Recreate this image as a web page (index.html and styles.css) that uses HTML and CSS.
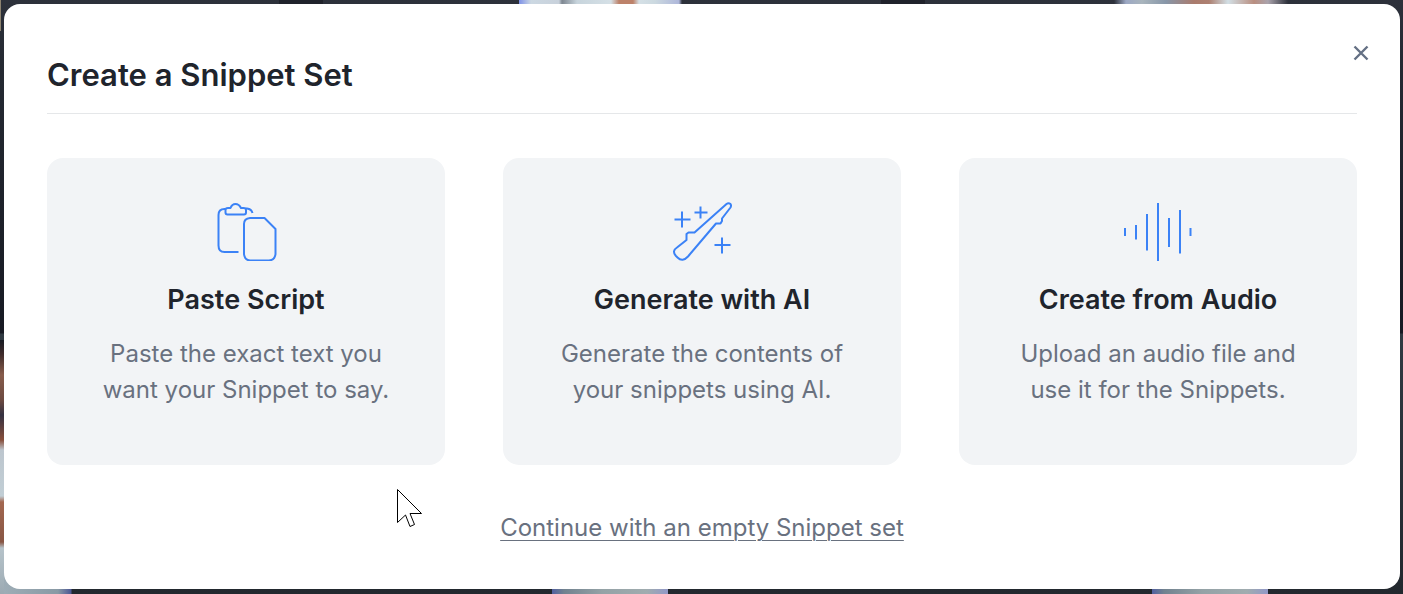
FILE: index.html
```html
<!DOCTYPE html>
<html lang="en">
<head>
<meta charset="utf-8">
<meta name="viewport" content="width=device-width, initial-scale=1">
<title>Create a Snippet Set</title>
<link rel="stylesheet" href="styles.css">
</head>
<body>
<main class="modal" role="dialog" aria-labelledby="modal-title">
  <header class="modal-header">
    <h1 class="modal-title" id="modal-title">Create a Snippet Set</h1>
    <button class="close" type="button" aria-label="Close">
      <svg width="16" height="18" viewBox="0 0 16 18" aria-hidden="true"><path d="M1.500 2.500l13 13M14.500 2.500l-13 13"/></svg>
    </button>
  </header>
  <div class="options">
    <button class="card" type="button">
      <svg class="icon" width="72" height="60" viewBox="0 0 72 60" aria-hidden="true">
        <path d="M28.500 51H14.500Q8.500 51 8.500 44.500V14Q8.500 8 14.500 8H15.500M35.500 7.500H37Q41.500 8 42.500 12"/>
        <path d="M15.500 9Q15.500 7 18 7H20.500Q22 3 25.500 3T31 7H33.500Q36 7 36 9V11.500Q36 13.500 34 13.500H17.500Q15.500 13.500 15.500 11.500Z"/>
        <path d="M40 17H54.500L65.500 28V53Q65 59 59 59.500H40Q34.500 59 34 53V23Q34 17.500 40 17Z"/>
      </svg>
      <span class="card-title">Paste Script</span>
      <span class="card-text">Paste the exact text you<br>want your Snippet to say.</span>
    </button>
    <button class="card" type="button">
      <svg class="icon" width="72" height="60" viewBox="0 0 72 60" aria-hidden="true">
        <path d="M60.500 3Q62.500 1.500 64.500 3Q65.500 4.500 64.500 6.500L56 17.500V20L54.500 22.500H50L22 55.500Q16.500 61.500 11.500 56.500L10 55Q5.500 50 11 46.500L20.500 39V33L22.500 31.500H28.500Z"/>
        <path d="M8.500 18.500H24.500M16 10.500V26.500M28.500 11.500H41.500M34.500 5.500V17.500M48.500 44H64.500M56 36.500V52.500"/>
      </svg>
      <span class="card-title">Generate with AI</span>
      <span class="card-text">Generate the contents of<br>your snippets using AI.</span>
    </button>
    <button class="card" type="button">
      <svg class="icon" width="72" height="60" viewBox="0 0 72 60" aria-hidden="true">
        <path d="M3 27V35M14 24V38.500M25 13V49.500M36 2V60M47 17V46M58 9V52.500M68.500 27V35"/>
      </svg>
      <span class="card-title">Create from Audio</span>
      <span class="card-text">Upload an audio file and<br>use it for the Snippets.</span>
    </button>
  </div>
  <a class="empty-link" href="#">Continue with an empty Snippet set</a>
</main>
<svg class="pointer" width="28" height="40" viewBox="0 0 28 40" aria-hidden="true"><path d="M1.500 1.500V34.500L9.500 27L14 38.500L18.500 36.500L14 25.500H25.500Z"/></svg>
</body>
</html>
```
FILE: styles.css
```css
* {
  box-sizing: border-box;
}

body {
  margin: 0;
  min-height: 100vh;
  padding: 4px 3px 5px 4px;
  display: flex;
  font-family: Inter, "Liberation Sans", sans-serif;
  background:
    linear-gradient(90deg, #7d91e8 0, #ccd8e2 12px, #c8d1db 40px, #7e8791 43px, #c7d4dc 58px, #d5e0e6 92px, #bd826a 100px, #bd826a 114px, #d5e0e6 120px, #ccd9e0 136px, #aeb7da 160px, transparent 163px) 519px 0 / 164px 4px no-repeat,
    linear-gradient(90deg, transparent, #9ca8c4 12px, #a9b5bd 28px, #8796a8 52px, #aa7b6d 80px, #ad8071 95px, #d2dfe5 114px, #b98e80 140px, #aaa3ac 154px, transparent 174px) 1114px 0 / 174px 4px no-repeat,
    linear-gradient(#8d8370, #8d8370) 0 0 / 1px 31px no-repeat,
    linear-gradient(#20222b, #20222b) 279px 0 / 44px 4px no-repeat,
    linear-gradient(#20222b, #20222b) 881px 0 / 44px 4px no-repeat,
    linear-gradient(#181b23 0, #3e2b2b 14px, #875c4b 35px, #6c4a41 60px, #343141 75px, #884f3c 100px, #bdc6ce 110px, #c1ced5 156px, #a36750 162px, #885644 202px, #b6c3ca 208px, #9caab3 254px) 0 340px / 4px 254px no-repeat,
    linear-gradient(90deg, #9faeb7, #899aa5 58px, #4c5894 71px, transparent 72px) 0 100% / 72px 20px no-repeat,
    linear-gradient(90deg, #5260a0, #71828f 12px, #94a2a6 50px, #a0acaf 95px, #9299c6 115px) 552px 100% / 116px 5px no-repeat,
    linear-gradient(90deg, #5260a0, #71828f 12px, #94a2a6 50px, #a0acaf 95px, #9299c6 115px) 1152px 100% / 116px 5px no-repeat,
    linear-gradient(#2d313b 0, #252a33 60px, #171a23 333px, #303a42 334px, #22282e 594px);
}

.modal {
  flex: 1;
  display: flex;
  flex-direction: column;
  padding: 40px 43px 43px;
  border-radius: 16px;
  background: #fff;
  color: #20242c;
}

.modal-header {
  display: flex;
  align-items: flex-start;
  justify-content: space-between;
  padding-bottom: 18px;
  border-bottom: 1px solid #e5e7e9;
}

.modal-title {
  margin: 0;
  padding-top: 11px;
  font-size: 31px;
  line-height: 40px;
  font-weight: 600;
}

.close {
  display: flex;
  margin-right: -12px;
  padding: 0;
  border: 0;
  background: none;
  cursor: pointer;
}

.close svg {
  fill: none;
  stroke: #647084;
  stroke-width: 2.4;
}

.options {
  display: grid;
  grid-template-columns: repeat(3, 1fr);
  gap: 58px;
  margin-top: 44px;
}

.card {
  display: flex;
  flex-direction: column;
  align-items: center;
  padding: 43px 20px 57px;
  border: 0;
  border-radius: 16px;
  background: #f2f4f6;
  color: inherit;
  font-family: inherit;
  text-align: center;
  cursor: pointer;
}

.icon {
  fill: none;
  stroke: #3b82f6;
  stroke-width: 2;
  stroke-linejoin: round;
}

.card-title {
  margin-top: 21px;
  font-size: 27px;
  line-height: 36px;
  font-weight: 600;
}

.card-text {
  margin-top: 18px;
  font-size: 24px;
  line-height: 36px;
  color: #69717f;
}

.empty-link {
  align-self: center;
  margin-top: 45px;
  font-size: 24px;
  line-height: 36px;
  color: #69717f;
  text-decoration: underline;
  text-decoration-thickness: 1px;
  text-underline-offset: 4px;
}

.pointer {
  position: absolute;
  left: 396px;
  top: 488px;
  fill: #fff;
  stroke: #000;
  stroke-width: 1;
  pointer-events: none;
}
```
